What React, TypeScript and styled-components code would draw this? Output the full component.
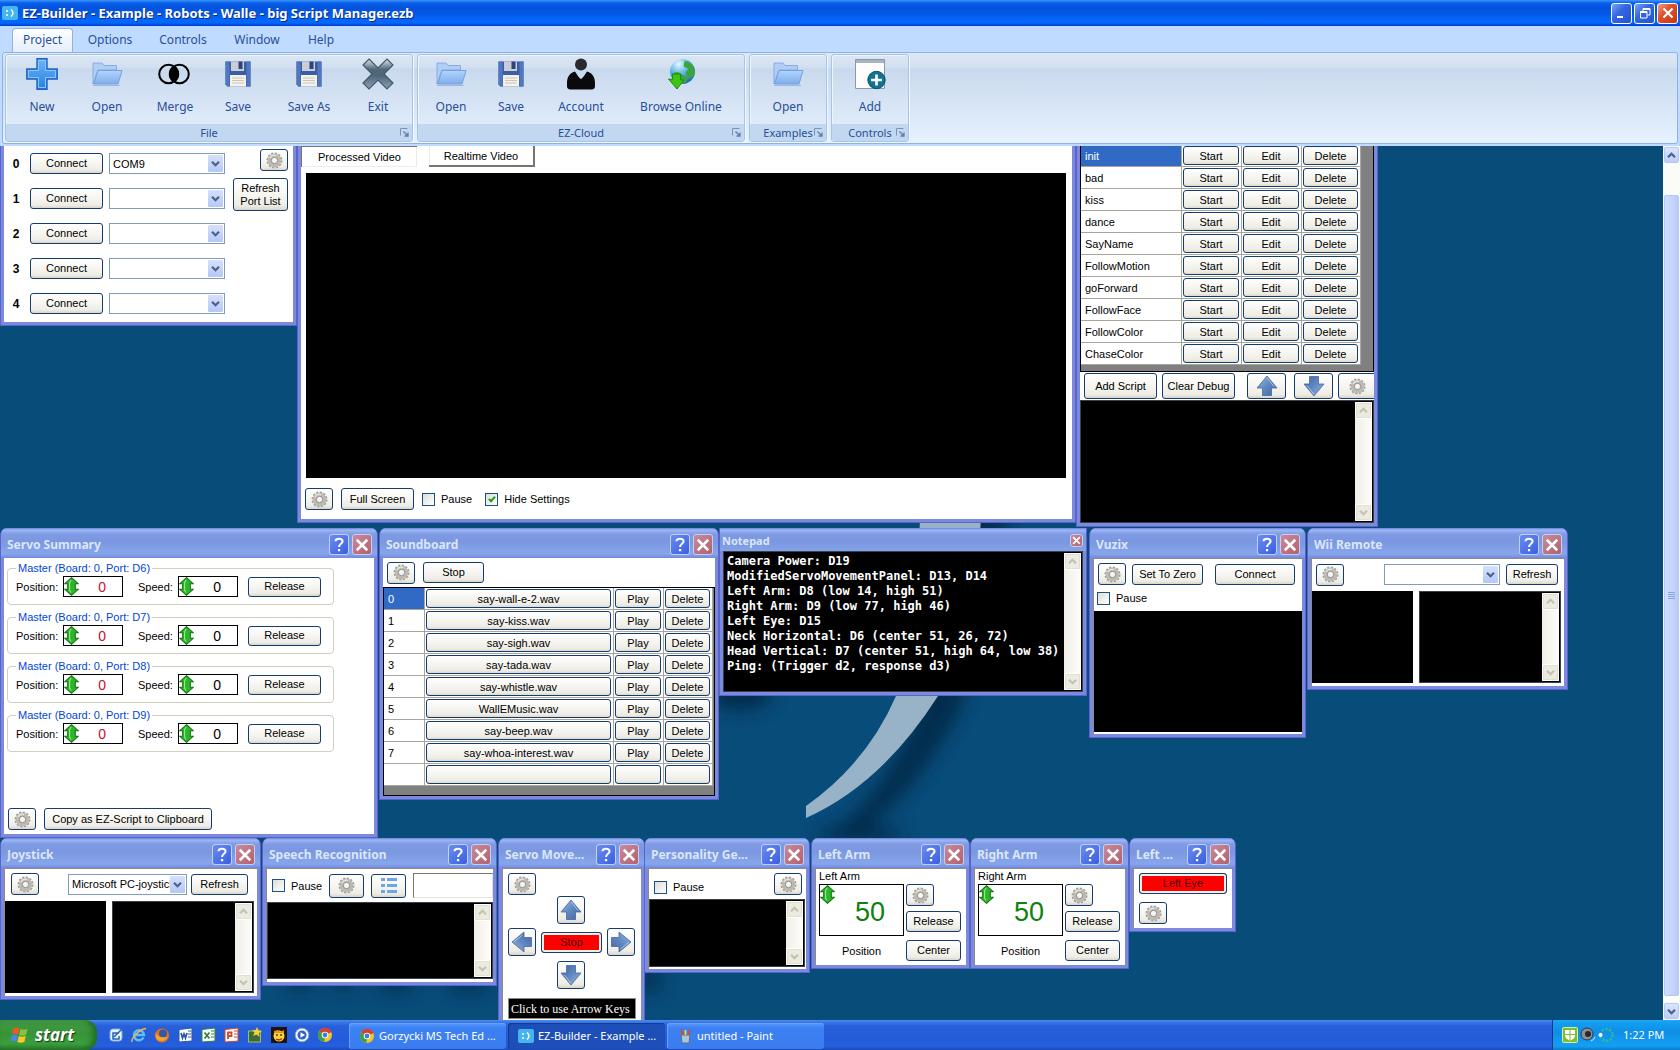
import React from "react";
import styled, { createGlobalStyle, css } from "styled-components";

const SANS = `"Liberation Sans", Arial, sans-serif`;
const UI = `"Noto Sans", Tahoma, sans-serif`;

const GlobalStyle = createGlobalStyle`
  *, *::before, *::after { box-sizing: border-box; }
  body { margin: 0; overflow: hidden; background: #084c7a; }
  button, input, select, textarea { font: inherit; color: inherit; margin: 0; }
`;

/* ---------- shell ---------- */

const Page = styled.div`
  display: flex;
  flex-direction: column;
  height: 100vh;
  font: 11px/14px ${SANS};
  color: #000;
`;

const TitleBar = styled.header`
  display: flex;
  align-items: center;
  gap: 4px;
  flex: none;
  height: 26px;
  padding: 0 2px;
  background: linear-gradient(#3c96ff 0, #0a5fe8 3px, #0453dd 8px, #0458e8 14px, #0468fc 20px, #0466fa 23px, #003ad0 26px);
  color: #fff;
`;

const AppName = styled.h1`
  flex: 1;
  margin: 0;
  font: bold 13px/18px ${UI};
  text-shadow: 1px 1px 0 #0a2a80;
`;

const Caption = styled.button<{ $close?: boolean }>`
  display: grid;
  place-items: center;
  width: 21px;
  height: 21px;
  padding: 0;
  border: 1px solid #fff;
  border-radius: 3px;
  background: ${(p) =>
    p.$close
      ? "linear-gradient(135deg, #f0a088, #e0502c 40%, #c43a10)"
      : "linear-gradient(135deg, #7da6f5, #3468e0 40%, #2252d4)"};
`;

const Captions = styled.div`
  display: flex;
  gap: 2px;
`;

const Tabs = styled.nav`
  display: flex;
  align-items: flex-end;
  flex: none;
  height: 26px;
  padding-left: 12px;
  background: #bfdbff;
  font: 12px/18px ${UI};
`;

const Tab = styled.button<{ $w: number; $active?: boolean }>`
  width: ${(p) => p.$w}px;
  height: 24px;
  padding: 0 0 2px;
  border: 1px solid transparent;
  border-bottom: 0;
  border-radius: 4px 4px 0 0;
  background: none;
  color: #2a4f96;
  ${(p) =>
    p.$active &&
    css`
      border-color: #8db2e3;
      background: linear-gradient(#fff, #e4eefb);
    `}
`;

const Ribbon = styled.div`
  flex: none;
  height: 94px;
  padding: 0 2px 2px;
  background: #bfdbff;
`;

const RibbonPanel = styled.div`
  display: flex;
  gap: 4px;
  height: 92px;
  padding: 1px 2px;
  border: 1px solid #8db2e3;
  border-radius: 3px;
  background: linear-gradient(#dde8f5 0, #d3e0f0 14px, #c9d9ed 16px, #d6e4f5 50px, #e7f2ff 100%);
`;

const Group = styled.section<{ $w: number }>`
  display: flex;
  flex-direction: column;
  width: ${(p) => p.$w}px;
  border: 1px solid #a9c4e4;
  border-radius: 3px;
  box-shadow: 1px 1px 0 #f2f8ff, inset 1px 1px 0 #eef5fd;
  font: 12px/18px ${UI};
  color: #2a4f96;
`;

const GroupItems = styled.div`
  display: flex;
  justify-content: center;
  flex: 1;
`;

const RibbonButton = styled.button<{ $w: number }>`
  display: flex;
  flex-direction: column;
  align-items: center;
  gap: 8px;
  width: ${(p) => p.$w}px;
  padding: 3px 0 0;
  border: 0;
  background: none;
  white-space: nowrap;
`;

const GroupLabel = styled.div`
  display: grid;
  grid-template-columns: 1fr;
  align-items: center;
  height: 17px;
  background: #c2d8f0;
  text-align: center;
  font-size: 11px;
  line-height: 16px;
  & > * { grid-area: 1 / 1; }
  & > svg { justify-self: end; margin-right: 3px; }
`;

const Workspace = styled.main`
  display: flex;
  flex: 1;
  min-height: 0;
`;

/* Free canvas that holds the control windows */
const Desktop = styled.div`
  position: relative;
  flex: 1;
  overflow: hidden;
  background: #084c7a;
`;

const Wallpaper = styled.svg`
  position: absolute;
  inset: 0;
  width: 100%;
  height: 100%;
`;

/* ---------- scroll bars ---------- */

const MainScroll = styled.div`
  display: flex;
  flex-direction: column;
  width: 17px;
  padding: 1px;
  background: #fbfbf8;
`;

const MainThumb = styled.div`
  display: grid;
  place-items: center;
  flex: 1;
  margin: 32px 0 7px;
  border: 1px solid #b4c8f6;
  border-radius: 2px;
  background: linear-gradient(90deg, #d3dffd, #c3d3fd 60%, #b8cbf6);
`;

const MainArrow = styled.button`
  display: grid;
  place-items: center;
  width: 15px;
  height: 16px;
  padding: 0;
  border: 1px solid #b4c8f6;
  border-radius: 2px;
  background: linear-gradient(#dbe5fe, #bccdf8);
`;

const MiniScroll = styled.div`
  display: flex;
  flex-direction: column;
  justify-content: space-between;
  flex: none;
  width: 17px;
  background: linear-gradient(90deg, #f0efe8, #fdfdfa);
`;

const MiniArrow = styled.button`
  display: grid;
  place-items: center;
  width: 17px;
  height: 17px;
  padding: 0;
  border: 1px solid #fff;
  border-radius: 2px;
  background: #ecebe0;
  box-shadow: inset 0 0 0 1px #e0dfd2;
`;

/* ---------- windows ---------- */

const Frame = styled.section<{ $x: number; $y: number; $w: number; $h: number; $cut?: boolean }>`
  position: absolute;
  left: ${(p) => p.$x}px;
  top: ${(p) => p.$y}px;
  width: ${(p) => p.$w}px;
  height: ${(p) => p.$h}px;
  display: flex;
  flex-direction: column;
  padding: 0 3px 3px;
  border: 1px solid #5a62cc;
  border-top: 0;
  border-radius: ${(p) => (p.$cut ? "0" : "7px 7px 0 0")};
  background: #7c8ade;
  overflow: hidden;
`;

const Caps = styled.header<{ $small?: boolean }>`
  display: flex;
  align-items: center;
  flex: none;
  gap: 3px;
  height: ${(p) => (p.$small ? 23 : 30)}px;
  margin: 0 -3px;
  padding: ${(p) => (p.$small ? "2px 3px 0 2px" : "3px 5px 0 6px")};
  background: linear-gradient(#6a7fe0 0, #9db8f2 2px, #7f9be6 6px, #7a97e0 14px, #84a2e8 22px, #86a4ec 26px, #7388dc 100%);
  color: #dbe6fa;
`;

const WinTitle = styled.h2<{ $small?: boolean }>`
  flex: 1;
  min-width: 0;
  margin: 0;
  overflow: hidden;
  font: bold ${(p) => (p.$small ? 11 : 12)}px/18px ${UI};
  white-space: nowrap;
`;

const CapButton = styled.button<{ $close?: boolean; $small?: boolean }>`
  display: grid;
  place-items: center;
  flex: none;
  width: ${(p) => (p.$small ? 13 : 20)}px;
  height: ${(p) => (p.$small ? 13 : 21)}px;
  padding: 0;
  border: 1px solid #c3d0f6;
  border-radius: 3px;
  background: ${(p) => (p.$close ? "linear-gradient(135deg, #c98a9c, #b4606c)" : "linear-gradient(135deg, #6a8cf0, #3a5fe0)")};
`;

const Body = styled.div<{ $sunken?: boolean }>`
  display: flex;
  flex-direction: column;
  flex: 1;
  min-height: 0;
  background: #fff;
  border: 0 solid #8c8c86;
  border-width: ${(p) => (p.$sunken ? "1px 0 0 1px" : "0")};
  overflow: hidden;
`;

const Row = styled.div<{ $gap?: number; $pad?: string; $h?: number; $center?: boolean; $top?: boolean }>`
  display: flex;
  align-items: ${(p) => (p.$top ? "flex-start" : "center")};
  justify-content: ${(p) => (p.$center ? "center" : "flex-start")};
  flex: none;
  gap: ${(p) => p.$gap ?? 8}px;
  padding: ${(p) => p.$pad ?? "0"};
  height: ${(p) => (p.$h ? p.$h + "px" : "auto")};
`;

const Column = styled.div<{ $gap?: number; $pad?: string; $end?: boolean }>`
  display: flex;
  flex-direction: column;
  gap: ${(p) => p.$gap ?? 0}px;
  padding: ${(p) => p.$pad ?? "0"};
  align-items: ${(p) => (p.$end ? "flex-end" : "flex-start")};
`;

const Panes = styled.div`
  display: flex;
  gap: 6px;
  height: 92px;
  padding-right: 3px;
`;

const Push = styled.span`
  flex: 1;
`;

const Button = styled.button<{ $w: number; $h?: number }>`
  display: grid;
  place-items: center;
  flex: none;
  width: ${(p) => p.$w}px;
  height: ${(p) => p.$h ?? 21}px;
  padding: 0;
  border: 1px solid #143c70;
  border-radius: 3px;
  background: linear-gradient(#fff, #f6f5f0 50%, #edece5 85%, #d9d5c9);
  font: 11px/13px ${SANS};
  white-space: pre-line;
`;

const RedButton = styled(Button)`
  background: #f00;
  box-shadow: inset 0 0 0 2px #f0efe8;
  color: #4a0000;
`;

const Flat = styled.button<{ $w: number; $down?: boolean }>`
  width: ${(p) => p.$w}px;
  height: 21px;
  padding: 0;
  background: #fff;
  border: 0 solid #77756c;
  border-width: ${(p) => (p.$down ? "1px 0 0 1px" : "0 2px 2px 0")};
  box-shadow: ${(p) => (p.$down ? "inset -1px -1px 0 #ecebe4" : "inset 1px 0 0 #ecebe4")};
`;

const Check = styled.label`
  display: flex;
  align-items: center;
  gap: 6px;
`;

const Tick = styled.input`
  appearance: none;
  display: grid;
  place-items: center;
  width: 13px;
  height: 13px;
  border: 1px solid #1c5180;
  background: linear-gradient(135deg, #dcdcd7, #fff);
  &:checked::after {
    content: "";
    width: 4px;
    height: 7px;
    margin-bottom: 2px;
    border: solid #21a121;
    border-width: 0 2px 2px 0;
    transform: rotate(42deg);
  }
`;

const SelectBox = styled.span<{ $w: number }>`
  display: grid;
  grid-template-columns: 1fr;
  align-items: center;
  flex: none;
  width: ${(p) => p.$w}px;
  height: 21px;
  border: 1px solid #7f9db9;
  background: #fff;
  & > * { grid-area: 1 / 1; }
  & > select {
    appearance: none;
    width: 100%;
    height: 19px;
    padding: 0 16px 0 3px;
    border: 0;
    background: none;
    line-height: 16px;
  }
  & > span {
    display: grid;
    place-items: center;
    justify-self: end;
    width: 15px;
    height: 17px;
    margin-right: 1px;
    border-radius: 1px;
    background: linear-gradient(#d5e0fc, #b4c8f6);
    pointer-events: none;
  }
`;

const BlackBox = styled.div<{ $w?: number; $m?: string }>`
  flex: ${(p) => (p.$w ? "none" : "1 1 auto")};
  width: ${(p) => (p.$w ? p.$w + "px" : "auto")};
  margin: ${(p) => p.$m ?? "0"};
  background: #000;
`;

const LogFrame = styled.div<{ $m?: string }>`
  display: flex;
  flex: 1;
  min-width: 0;
  min-height: 0;
  margin: ${(p) => p.$m ?? "0"};
  padding: 1px;
  border: 1px solid #39424a;
  background: #000;
`;

const LogText = styled.textarea<{ $mono?: boolean }>`
  flex: 1;
  min-width: 0;
  padding: ${(p) => (p.$mono ? "1px 2px 0" : "0 2px")};
  border: 0;
  outline: 0;
  resize: none;
  overflow: hidden;
  background: #000;
  color: #fff;
  ${(p) =>
    p.$mono &&
    css`
      font: bold 12px/15px "DejaVu Sans Mono", monospace;
      white-space: pre;
    `}
`;

const PortNumber = styled.b`
  width: 16px;
  font: bold 12px/16px ${SANS};
  text-align: center;
`;

/* ---------- tables ---------- */

const GridBox = styled.div<{ $h?: number }>`
  flex: ${(p) => (p.$h ? "none" : "1")};
  height: ${(p) => (p.$h ? p.$h + "px" : "auto")};
  overflow: hidden;
  border: 1px solid #000;
  background: #808080;
`;

const Table = styled.table<{ $w: number }>`
  width: ${(p) => p.$w}px;
  border-collapse: separate;
  border-spacing: 0;
  table-layout: fixed;
  background: #fff;
  td {
    height: 22px;
    padding: 0 2px 0 1px;
    border: solid #a8a69c;
    border-width: 0 1px 1px 0;
  }
  td:first-child { padding-left: 4px; }
  tr:first-child td:first-child { background: #316ac5; color: #fff; }
`;

const CellButton = styled.button`
  display: block;
  width: 100%;
  height: 19px;
  padding: 0;
  border: 1px solid #143c70;
  border-radius: 3px;
  background: linear-gradient(#fff, #f5f4ef 50%, #edece5 85%, #dedace);
  line-height: 16px;
`;

/* ---------- servo parts ---------- */

const ServoSet = styled.fieldset`
  display: flex;
  align-items: center;
  width: 327px;
  height: 43px;
  margin: 0;
  padding: 1px 0 0 8px;
  border: 1px solid #d0d0bf;
  border-radius: 4px;
  legend {
    padding: 0 2px;
    color: #0046d5;
    line-height: 13px;
  }
`;

const ServoLabel = styled.label<{ $w: number }>`
  width: ${(p) => p.$w}px;
`;

const Spin = styled.span<{ $big?: boolean; $gap?: number }>`
  display: flex;
  align-items: flex-start;
  flex: none;
  width: ${(p) => (p.$big ? 85 : 60)}px;
  height: ${(p) => (p.$big ? 52 : 21)}px;
  margin-right: ${(p) => p.$gap ?? 0}px;
  border: 1px solid #000;
  background: #fff;
  input {
    flex: 1;
    min-width: 0;
    height: 100%;
    padding: ${(p) => (p.$big ? "4px 18px 0 0" : "0 16px 0 0")};
    border: 0;
    outline: 0;
    background: none;
    text-align: right;
    font-size: ${(p) => (p.$big ? 27 : 14)}px;
  }
`;

const Value = styled.input<{ $c: string }>`
  color: ${(p) => p.$c};
`;

const Phrase = styled.input`
  flex: 1;
  min-width: 0;
  height: 25px;
  border: 1px solid #e4e2d8;
  border-top-color: #77756c;
  border-left-color: #77756c;
`;

const KeyHint = styled.input`
  width: 128px;
  height: 21px;
  margin: 9px 0 0 5px;
  padding: 2px 0 0 2px;
  border: 1px solid #8c8c86;
  background: #000;
  color: #fff;
  font: 12px/16px "Liberation Serif", serif;
`;

/* ---------- task bar ---------- */

const TaskBar = styled.footer`
  display: flex;
  flex: none;
  height: 30px;
  background: linear-gradient(#4a8ef0 0, #3a78e8 2px, #2860dc 6px, #245bd8 20px, #2460e0 26px, #1c48b4 30px);
  color: #fff;
  font: 11px/16px ${UI};
`;

const Start = styled.button`
  display: flex;
  align-items: center;
  gap: 6px;
  width: 97px;
  padding: 0 0 0 10px;
  border: 0;
  border-radius: 0 12px 12px 0;
  background: linear-gradient(#5cad5c 0, #3f9a40 4px, #389338 14px, #3aa03c 24px, #2a7a2c 100%);
  box-shadow: inset -4px 0 6px #1f6a24;
  color: #fff;
  font: italic bold 17px/20px "Open Sans", "Noto Sans", sans-serif;
  text-shadow: 1px 1px 1px #143c14;
`;

const QuickLaunch = styled.div`
  display: flex;
  align-items: center;
  justify-content: space-between;
  width: 225px;
  margin: 0 16px 0 11px;
`;

const QuickButton = styled.button`
  display: grid;
  padding: 0;
  border: 0;
  background: none;
`;

const Task = styled.button<{ $active?: boolean }>`
  display: flex;
  align-items: center;
  gap: 4px;
  width: 157px;
  height: 26px;
  margin: 3px 2px 0 0;
  padding: 0 0 0 10px;
  border: 0;
  border-radius: 3px;
  background: ${(p) => (p.$active ? "#1e4fb8" : "linear-gradient(#5a98f8, #3c81f3 5px, #3a7cf0)")};
  box-shadow: inset 1px 1px 1px ${(p) => (p.$active ? "#123a8c" : "#6aa4fa")};
  font: 11px/16px ${UI};
  white-space: nowrap;
  & > svg { flex: none; }
`;

const Tray = styled.div`
  display: flex;
  align-items: center;
  gap: 2px;
  width: 128px;
  margin-left: auto;
  padding-left: 9px;
  border-left: 1px solid #0a3a90;
  background: linear-gradient(#1ea8f4 0, #139ef0 3px, #0f8ee8 12px, #12a0f4 26px, #0c78c8 30px);
`;

const Clock = styled.time`
  margin-left: 7px;
`;

/* ---------- icons ---------- */

const Gear = () => (
  <svg width="17" height="17" viewBox="0 0 17 17" fill="none" aria-hidden="true">
    <circle cx="8.5" cy="8.5" r="7.1" stroke="#a3a09b" strokeWidth="1.8" strokeDasharray="2.3 1.42" />
    <circle cx="8.5" cy="8.5" r="5" stroke="#bdbab4" strokeWidth="3.6" />
    <circle cx="8.5" cy="8.5" r="3.2" stroke="#8f8d89" strokeWidth="1" />
    <path d="M4 6a5.2 5.2 0 0 1 6-2.4" stroke="#e6e4df" strokeWidth="1.4" />
  </svg>
);

const Chevron = ({ up, color = "#4d6185", size = 9 }: { up?: boolean; color?: string; size?: number }) => (
  <svg width={size} height={size} viewBox="0 0 9 9" fill="none" aria-hidden="true">
    <path d={up ? "M1 6.2 4.5 2.7 8 6.2" : "M1 2.8 4.5 6.3 8 2.8"} stroke={color} strokeWidth="2.2" />
  </svg>
);

const Cross = ({ size = 12 }: { size?: number }) => (
  <svg width={size} height={size} viewBox="0 0 12 12" aria-hidden="true">
    <path d="M1.5 1.5 10.5 10.5M10.5 1.5 1.5 10.5" stroke="#fff" strokeWidth="2.2" />
  </svg>
);

const Question = () => (
  <svg width="12" height="15" viewBox="0 0 12 15" fill="none" aria-hidden="true">
    <path d="M2.5 4.2C2.6 1 9.6 .8 9.6 4.3 9.6 6.8 6 6.8 6 10" stroke="#fff" strokeWidth="2" />
    <path d="M4.9 12h2.3v2.2H4.9z" fill="#fff" />
  </svg>
);

const UpDown = () => (
  <svg width="15" height="19" viewBox="0 0 13 19" preserveAspectRatio="none" aria-hidden="true">
    <path d="M6.5.6 12.400 6.800H9.800V12.200H12.400L6.500 18.400.600 12.200H3.200V6.800H.600Z" fill="#2fb52c" stroke="#127312" strokeWidth=".9" />
    <path d="M6 3 4.800 6v7L6 15.500" stroke="#92ea83" fill="none" />
  </svg>
);

const Arrow = ({ turn = 0 }: { turn?: number }) => (
  <svg width="22" height="22" viewBox="0 0 22 22" aria-hidden="true">
    <defs>
      <linearGradient id="arrowFill" x1="0" y1="0" x2="1" y2="1">
        <stop offset="0" stopColor="#9dbbe2" />
        <stop offset=".5" stopColor="#6288bf" />
        <stop offset="1" stopColor="#3d66a8" />
      </linearGradient>
    </defs>
    <g transform={`rotate(${turn} 11 11)`}>
      <path d="M11 1 21 13H15.5V20.5H6.5V13H1Z" fill="url(#arrowFill)" stroke="#46679c" strokeWidth=".8" />
      <path d="M11 2.600 18 11.500" stroke="#bcd2ee" strokeWidth=".8" />
    </g>
  </svg>
);

const ListIcon = () => (
  <svg width="18" height="17" viewBox="0 0 18 17" aria-hidden="true">
    {[1, 7, 13].map((y) => (
      <g key={y} fill="#6aa5ee">
        <rect x="1" y={y} width="4" height="3" />
        <rect x="7" y={y} width="10" height="3" />
      </g>
    ))}
  </svg>
);

const AppIcon = () => (
  <svg width="16" height="14" viewBox="0 0 16 14" aria-hidden="true">
    <rect width="16" height="14" rx="2" fill="#45b5f2" />
    <path d="M5 4v2M5 8v2M9 3.500Q13 7 9 10.500" stroke="#fff" strokeWidth="1.500" fill="none" />
  </svg>
);

const Launcher = () => (
  <svg width="9" height="9" viewBox="0 0 9 9" fill="none" aria-hidden="true">
    <path d="M.5 7.500V.500h7" stroke="#7c93b8" />
    <path d="M3.500 3.500 8 8M8 4.500V8H4.500" stroke="#5f7ba8" strokeWidth="1.300" />
  </svg>
);

const svgProps = { width: 32, height: 32, viewBox: "0 0 32 32", "aria-hidden": true } as const;

const PlusIcon = () => (
  <svg {...svgProps}>
    <defs>
      <linearGradient id="plus" x1="0" y1="0" x2="0" y2="1">
        <stop offset="0" stopColor="#6cb4f8" />
        <stop offset="1" stopColor="#2680e0" />
      </linearGradient>
    </defs>
    <path d="M11 .800h10V11H31.200V21H21V31.200H11V21H.800V11H11z" fill="url(#plus)" stroke="#1f62c4" strokeWidth="1.400" />
    <path d="M12.500 2.500h7V12.500H29.500v7H19.500V29.500h-7V19.500H2.500v-7H12.500z" stroke="#8cc6fa" fill="none" />
  </svg>
);

const FolderIcon = () => (
  <svg {...svgProps}>
    <defs>
      <linearGradient id="folder" x1="0" y1="0" x2="0" y2="1">
        <stop offset="0" stopColor="#b3d4fb" />
        <stop offset="1" stopColor="#7fadec" />
      </linearGradient>
    </defs>
    <path d="M2 26V5h9l2 2.500h12.500V12H7z" fill="#b0cdf4" stroke="#86ace6" />
    <path d="M7 12.500h24l-4 13.500H2.500z" fill="url(#folder)" stroke="#74a0e4" />
    <path d="M2 27.500h27" stroke="#8aa6cc" opacity=".7" />
  </svg>
);

const MergeIcon = () => (
  <svg width="34" height="32" viewBox="0 0 34 32" aria-hidden="true">
    <path d="M16 7.500a9.500 9.500 0 0 1 0 17 9.500 9.500 0 0 1 0-17z" fill="#000" />
    <circle cx="10.500" cy="16" r="9.300" fill="none" stroke="#000" strokeWidth="2" />
    <circle cx="21.500" cy="16" r="9.300" fill="none" stroke="#000" strokeWidth="2" />
  </svg>
);

const DiskIcon = () => (
  <svg {...svgProps}>
    <path d="M3.500 3.500h25v25h-23l-2-2z" fill="#3b5ea8" />
    <path d="M3.500 3.500h4v25h-2l-2-2zM24.500 3.500h4v25h-4z" fill="#5277be" />
    <path d="M9 3.500h13V13H9z" fill="#c9cdd6" />
    <path d="M16.500 3.500h4V11h-4z" fill="#2c4478" />
    <path d="M8 17h16v11.500H8z" fill="#f4f2ea" />
    <path d="M10 20h12M10 22.500h12M10 25h12" stroke="#c9c6bb" />
  </svg>
);

const ExitIcon = () => (
  <svg {...svgProps}>
    <defs>
      <linearGradient id="exit" x1="0" y1="0" x2="0" y2="1">
        <stop offset="0" stopColor="#dfe8f0" />
        <stop offset=".35" stopColor="#51677a" />
        <stop offset=".55" stopColor="#4f6578" />
        <stop offset="1" stopColor="#8ea3b5" />
      </linearGradient>
    </defs>
    <path d="M7 1 16 10 25 1 31 7 22 16l9 9-6 6-9-9-9 9-6-6 9-9-9-9z" fill="url(#exit)" stroke="#44586a" strokeWidth="1.200" />
  </svg>
);

const PersonIcon = () => (
  <svg {...svgProps}>
    <circle cx="16" cy="6.500" r="6" fill="#2a2a2c" />
    <path d="M10 13.500c1.500 2 4 6.500 6 7.500 2-1 4.500-5.500 6-7.500C28 15 30 20 30 25v3c0 2-1 3.500-3.500 3.500h-21C3 31.500 2 30 2 28v-3c0-5 2-10 8-11.500z" fill="#0a0a0c" />
  </svg>
);

const GlobeIcon = () => (
  <svg {...svgProps}>
    <defs>
      <radialGradient id="globe" cx=".35" cy=".2" r=".9">
        <stop offset="0" stopColor="#e9f8ff" />
        <stop offset=".45" stopColor="#5cb4e4" />
        <stop offset="1" stopColor="#14609c" />
      </radialGradient>
    </defs>
    <circle cx="17.500" cy="13.500" r="12.500" fill="url(#globe)" />
    <path d="M8 16c2-3 6-2 8 0s5 1 6 4-3 6-6 5.500C10 25 7 20 8 16zM20 3c6 1 10 6 9.800 11-1 6-5 7-7 5s-3-5 0-7-4-2-4-4 0-4 1.200-5z" fill="#3aa53c" />
    <path d="M7.500 16h8v6H19l-7 9L3.500 21l4 .500z" fill="#3cc412" stroke="#1d8a0a" />
  </svg>
);

const AddIcon = () => (
  <svg {...svgProps}>
    <path d="M1.500 1.500h29v29h-29z" fill="#fdfdfd" stroke="#8d97a6" />
    <path d="M2 2h28v3H2z" fill="#a9b2c0" />
    <circle cx="22.500" cy="22" r="8.700" fill="#11748c" stroke="#0b5266" />
    <path d="M22.500 16.500v11M17 22h11" stroke="#fff" strokeWidth="2.600" />
  </svg>
);

const Flag = () => (
  <svg width="19" height="18" viewBox="0 0 19 18" aria-hidden="true">
    <path d="M3.500 2.500q3-2 6 0L8 8.500q-3-1.700-6 0z" fill="#f0582c" />
    <path d="M10.500 3q3 1.500 7 0L16 9q-3.500 1.500-7 0z" fill="#86c440" />
    <path d="M1.800 9.500q3-1.700 6 0L6.300 15.500q-3-1.700-6 0z" fill="#4a86ec" />
    <path d="M8.800 10q3.500 1.500 7 0l-1.500 6q-3.500 1.500-7 0z" fill="#fbc928" />
  </svg>
);

const Q = ({ children }: { children: React.ReactNode }) => (
  <svg width="16" height="16" viewBox="0 0 16 16" aria-hidden="true">
    {children}
  </svg>
);

const ChromeShapes = () => (
  <>
    <circle cx="8" cy="8" r="7" fill="#f2c52c" />
    <path d="M8 8 2 4.300A7 7 0 0 1 14.500 5z" fill="#d93f30" />
    <path d="M8 8 2 4.300A7 7 0 0 0 7.500 15z" fill="#3c9f48" />
    <circle cx="8" cy="8" r="3.300" fill="#fff" />
    <circle cx="8" cy="8" r="2.400" fill="#3d7fe0" />
  </>
);

const OfficeShapes = ({ color, mark }: { color: string; mark: string }) => (
  <>
    <path d="M1 2.500 14 1v13L1 15z" fill="#fff" stroke={color} />
    <path d="M10 4h3.500M10 7h3.500M10 10h3.500" stroke={color} />
    <path d={mark} stroke={color} strokeWidth="1.800" fill="none" />
  </>
);

const quick: [string, React.ReactNode][] = [
  ["Show Desktop", <><rect x="2" y="2" width="12" height="12" rx="3" fill="#e9f1fb" stroke="#7fb0e0" /><path d="M6 10 14 2M11 6H5v6h6V9" stroke="#2a64ac" strokeWidth="1.500" fill="none" /></>],
  ["Internet Explorer", <><path d="M12.500 10.500A5 5 0 1 1 13 8H4" stroke="#5cc0f6" strokeWidth="2.500" fill="none" /><path d="M1 15C0 11 9 2 15 1.500" stroke="#f0bc3a" strokeWidth="1.400" fill="none" /></>],
  ["Firefox", <><circle cx="8" cy="8.500" r="7" fill="#e8701a" /><circle cx="9" cy="6.500" r="4" fill="#3458a8" /><path d="M1.500 5c1 4 5 6 12 5-1 4-9 6-11.500 1z" fill="#f7a428" /></>],
  ["Word", <OfficeShapes color="#2f58a8" mark="M3 6 4.500 11 6 7 7.500 11 9 6" />],
  ["Excel", <OfficeShapes color="#2f8440" mark="M3.500 5.500 8.500 11.500M8.500 5.500 3.500 11.500" />],
  ["PowerPoint", <OfficeShapes color="#d2482a" mark="M4 12V5.500H7.500V9H4" />],
  ["Notebook", <><rect x="1.500" y="4" width="12" height="11" fill="#3f6a3a" stroke="#9bc24c" /><path d="m10 0 1.500 3.500L15 4l-3 2 .5 4L9.500 7.500 6 9l1.500-3.500L5 3l3.500.2z" fill="#f8d22e" /></>],
  ["Character", <><rect width="16" height="16" fill="#1c1410" /><circle cx="8" cy="9" r="5.500" fill="#f9d53a" /><path d="M3 4 7 3l2 2 4-2v3H3z" fill="#f08a24" /><path d="M5 12q3 2 6-.5" stroke="#c02c18" strokeWidth="1.500" fill="none" /><path d="M6 7v2M10 7v2" stroke="#000" /></>],
  ["Media Player", <><circle cx="8" cy="8" r="6.800" fill="#f2f5f9" stroke="#8fa3bd" /><circle cx="8" cy="8" r="4.500" fill="#2e62c8" /><path d="M6.500 5.300 11 8l-4.500 2.700z" fill="#fff" /></>],
  ["Chrome", <ChromeShapes />],
];

/* ---------- shared pieces ---------- */

const Mini = () => (
  <MiniScroll>
    <MiniArrow disabled aria-label="Scroll up"><Chevron up color="#c4c2b4" /></MiniArrow>
    <MiniArrow disabled aria-label="Scroll down"><Chevron color="#c4c2b4" /></MiniArrow>
  </MiniScroll>
);

const Log = ({ label, m, text = "", mono }: { label: string; m?: string; text?: string; mono?: boolean }) => (
  <LogFrame $m={m}>
    <LogText aria-label={label} readOnly value={text} $mono={mono} />
    <Mini />
  </LogFrame>
);

const GearButton = ({ w = 28, h = 22 }: { w?: number; h?: number }) => (
  <Button $w={w} $h={h} aria-label="Settings"><Gear /></Button>
);

const Dropdown = ({ label, w, value = "" }: { label: string; w: number; value?: string }) => (
  <SelectBox $w={w}>
    <select aria-label={label} defaultValue={value}><option>{value}</option></select>
    <span><Chevron /></span>
  </SelectBox>
);

const CheckBox = ({ text, on }: { text: string; on?: boolean }) => (
  <Check><Tick type="checkbox" defaultChecked={on} />{text}</Check>
);

type WinProps = {
  title?: string; x: number; y: number; w: number; h: number;
  small?: boolean; sunken?: boolean; children: React.ReactNode;
};

const Win = ({ title, x, y, w, h, small, sunken, children }: WinProps) => (
  <Frame $x={x} $y={y} $w={w} $h={h} $cut={!title || small}>
    {title && (
      <Caps $small={small}>
        <WinTitle $small={small}>{title}</WinTitle>
        {!small && <CapButton aria-label="Help"><Question /></CapButton>}
        <CapButton $close $small={small} aria-label="Close"><Cross size={small ? 9 : 14} /></CapButton>
      </Caps>
    )}
    <Body $sunken={sunken}>{children}</Body>
  </Frame>
);

const Item = ({ icon, label, w }: { icon: React.ReactNode; label: string; w: number }) => (
  <RibbonButton $w={w}>{icon}{label}</RibbonButton>
);

const RibbonGroup = ({ name, w, children }: { name: string; w: number; children: React.ReactNode }) => (
  <Group $w={w}>
    <GroupItems>{children}</GroupItems>
    <GroupLabel><span>{name}</span><Launcher /></GroupLabel>
  </Group>
);

const ServoRow = ({ port }: { port: string }) => (
  <ServoSet>
    <legend>Master (Board: 0, Port: {port})</legend>
    <ServoLabel $w={47} htmlFor={`pos${port}`}>Position:</ServoLabel>
    <Spin $gap={15}><UpDown /><Value id={`pos${port}`} $c="#c8102c" defaultValue="0" /></Spin>
    <ServoLabel $w={40} htmlFor={`speed${port}`}>Speed:</ServoLabel>
    <Spin $gap={10}><UpDown /><Value id={`speed${port}`} $c="#000" defaultValue="0" /></Spin>
    <Button $w={73} $h={20}>Release</Button>
  </ServoSet>
);

const ArmName = styled.label`
  display: block;
  height: 15px;
  padding-left: 3px;
`;

const ArmGrid = styled.div`
  display: grid;
  grid-template-columns: 85px 55px;
  column-gap: 2px;
  padding-left: 3px;
`;

const ArmCaption = styled.span`
  align-self: end;
  padding-bottom: 3px;
  text-align: center;
`;

const Arm = ({ name, x }: { name: string; x: number }) => (
  <Win title={name} x={x} y={692} w={159} h={131} sunken>
    <ArmName htmlFor={`arm${x}`}>{name}</ArmName>
    <ArmGrid>
      <Spin $big><UpDown /><Value id={`arm${x}`} $c="#108010" defaultValue="50" /></Spin>
      <Column $gap={5}><GearButton /><Button $w={55}>Release</Button></Column>
      <ArmCaption>Position</ArmCaption>
      <Column $pad="4px 0 0"><Button $w={55}>Center</Button></Column>
    </ArmGrid>
  </Win>
);

const scripts = ["init", "bad", "kiss", "dance", "SayName", "FollowMotion", "goForward", "FollowFace", "FollowColor", "ChaseColor"];
const sounds = ["say-wall-e-2.wav", "say-kiss.wav", "say-sigh.wav", "say-tada.wav", "say-whistle.wav", "WallEMusic.wav", "say-beep.wav", "say-whoa-interest.wav", ""];

const notes = `Camera Power: D19
ModifiedServoMovementPanel: D13, D14
Left Arm: D8 (low 14, high 51)
Right Arm: D9 (low 77, high 46)
Left Eye: D15
Neck Horizontal: D6 (center 51, 26, 72)
Head Vertical: D7 (center 51, high 64, low 38)
Ping: (Trigger d2, response d3)`;

export default function App() {
  return (
    <Page>
      <GlobalStyle />
      <TitleBar>
        <AppIcon />
        <AppName>EZ-Builder - Example - Robots - Walle - big Script Manager.ezb</AppName>
        <Captions>
          <Caption aria-label="Minimize">
            <svg width="12" height="12" aria-hidden="true"><path d="M1 9h6v2H1z" fill="#fff" /></svg>
          </Caption>
          <Caption aria-label="Restore">
            <svg width="12" height="12" fill="none" stroke="#fff" aria-hidden="true">
              <path d="M4 4V1.500h7V8H8.500M1 4.500h7V11H1.500V4.500M1 5.500h7M4 2.500h7" />
            </svg>
          </Caption>
          <Caption $close aria-label="Close"><Cross /></Caption>
        </Captions>
      </TitleBar>

      <Tabs>
        <Tab $w={61} $active>Project</Tab>
        <Tab $w={74}>Options</Tab>
        <Tab $w={72}>Controls</Tab>
        <Tab $w={76}>Window</Tab>
        <Tab $w={52}>Help</Tab>
      </Tabs>

      <Ribbon>
        <RibbonPanel>
          <RibbonGroup name="File" w={408}>
            <Item icon={<PlusIcon />} label="New" w={60} />
            <Item icon={<FolderIcon />} label="Open" w={70} />
            <Item icon={<MergeIcon />} label="Merge" w={66} />
            <Item icon={<DiskIcon />} label="Save" w={60} />
            <Item icon={<DiskIcon />} label="Save As" w={82} />
            <Item icon={<ExitIcon />} label="Exit" w={56} />
          </RibbonGroup>
          <RibbonGroup name="EZ-Cloud" w={328}>
            <Item icon={<FolderIcon />} label="Open" w={60} />
            <Item icon={<DiskIcon />} label="Save" w={60} />
            <Item icon={<PersonIcon />} label="Account" w={80} />
            <Item icon={<GlobeIcon />} label="Browse Online" w={120} />
          </RibbonGroup>
          <RibbonGroup name="Examples" w={78}>
            <Item icon={<FolderIcon />} label="Open" w={70} />
          </RibbonGroup>
          <RibbonGroup name="Controls" w={78}>
            <Item icon={<AddIcon />} label="Add" w={70} />
          </RibbonGroup>
        </RibbonPanel>
      </Ribbon>

      <Workspace>
        <Desktop>
          <Wallpaper aria-hidden="true">
            <defs>
              <filter id="soft" x="-50%" y="-50%" width="200%" height="200%">
                <feGaussianBlur stdDeviation="9" />
              </filter>
            </defs>
            <g fill="#03203c" opacity=".75" filter="url(#soft)">
              <path d="M950 370H1010L1000 400 962 560Q905 670 832 700V685Q885 650 920 560z" />
              <ellipse cx="740" cy="548" rx="32" ry="16" />
              <ellipse cx="860" cy="688" rx="44" ry="8" />
            </g>
            <g fill="#03203c" opacity=".6" filter="url(#soft)">
              <ellipse cx="300" cy="835" rx="14" ry="10" />
              <ellipse cx="342" cy="835" rx="12" ry="10" />
              <ellipse cx="396" cy="837" rx="20" ry="10" />
              <ellipse cx="468" cy="837" rx="22" ry="10" />
              <ellipse cx="650" cy="834" rx="12" ry="14" />
            </g>
            <path d="M920 370H981Q978 470 938 550 882 638 806 672V660Q867 617 896 550 918 480 920 370z" fill="#98b3c8" />
          </Wallpaper>

          <Win x={0} y={0} w={297} h={180}>
            <Row $gap={0} $top>
              <Column $gap={14} $pad="7px 0 0 4px">
                {["COM9", "", "", "", ""].map((port, i) => (
                  <Row key={i} $gap={6}>
                    <PortNumber>{i}</PortNumber>
                    <Button $w={73}>Connect</Button>
                    <Dropdown label={`Port ${i}`} w={116} value={port} />
                  </Row>
                ))}
              </Column>
              <Push />
              <Column $gap={7} $end $pad="3px 5px 0 0">
                <GearButton />
                <Button $w={55} $h={33}>{"Refresh\nPort List"}</Button>
              </Column>
            </Row>
          </Win>

          <Win x={297} y={0} w={779} h={377}>
            <Row $gap={12}>
              <Flat $w={116} $down>Processed Video</Flat>
              <Flat $w={106}>Realtime Video</Flat>
            </Row>
            <BlackBox $m="6px 6px 0 5px" />
            <Row $gap={8} $pad="10px 0 9px 4px">
              <GearButton />
              <Button $w={73} $h={22}>Full Screen</Button>
              <Row $gap={13}>
                <CheckBox text="Pause" />
                <CheckBox text="Hide Settings" on />
              </Row>
            </Row>
          </Win>

          <Win x={1076} y={-2} w={302} h={383}>
            <GridBox $h={228}>
              <Table $w={280}>
                <colgroup><col width="101" /><col width="60" /><col width="60" /><col width="59" /></colgroup>
                <tbody>
                  {scripts.map((s) => (
                    <tr key={s}>
                      <td>{s}</td>
                      <td><CellButton>Start</CellButton></td>
                      <td><CellButton>Edit</CellButton></td>
                      <td><CellButton>Delete</CellButton></td>
                    </tr>
                  ))}
                </tbody>
              </Table>
            </GridBox>
            <Row $gap={5} $h={28} $pad="0 0 0 4px">
              <Button $w={73} $h={26}>Add Script</Button>
              <Button $w={73} $h={26}>Clear Debug</Button>
              <Row $gap={8} $pad="0 0 0 7px">
                <Button $w={39} $h={26} aria-label="Move up"><Arrow /></Button>
                <Button $w={39} $h={26} aria-label="Move down"><Arrow turn={180} /></Button>
              </Row>
              <GearButton w={39} h={26} />
            </Row>
            <Log label="Debug output" />
          </Win>

          <Win title="Servo Summary" x={0} y={382} w={378} h={310}>
            <Column $gap={6} $pad="4px 0 0 3px">
              {["D6", "D7", "D8", "D9"].map((p) => <ServoRow key={p} port={p} />)}
            </Column>
            <Push />
            <Row $gap={8} $pad="0 0 4px 4px">
              <GearButton />
              <Button $w={168} $h={22}>Copy as EZ-Script to Clipboard</Button>
            </Row>
          </Win>

          <Win title="Soundboard" x={379} y={382} w={340} h={272}>
            <Row $gap={8} $h={29} $pad="0 0 0 4px">
              <GearButton />
              <Button $w={61}>Stop</Button>
            </Row>
            <GridBox>
              <Table $w={329}>
                <colgroup><col width="41" /><col width="189" /><col width="50" /><col width="49" /></colgroup>
                <tbody>
                  {sounds.map((s, i) => (
                    <tr key={i}>
                      <td>{s ? i : ""}</td>
                      <td><CellButton>{s}</CellButton></td>
                      <td><CellButton>{s && "Play"}</CellButton></td>
                      <td><CellButton>{s && "Delete"}</CellButton></td>
                    </tr>
                  ))}
                </tbody>
              </Table>
            </GridBox>
          </Win>

          <Win title="Notepad" x={719} y={382} w={368} h={168} small>
            <Log label="Notes" text={notes} mono />
          </Win>

          <Win title="Vuzix" x={1089} y={382} w={217} h={210} sunken>
            <Row $gap={6} $pad="4px 0 0 4px">
              <GearButton />
              <Button $w={71}>Set To Zero</Button>
              <Row $pad="0 0 0 6px"><Button $w={80}>Connect</Button></Row>
            </Row>
            <Row $h={26} $pad="0 0 0 3px"><CheckBox text="Pause" /></Row>
            <BlackBox $m="0 0 2px" />
          </Win>

          <Win title="Wii Remote" x={1307} y={382} w={261} h={162} sunken>
            <Row $gap={6} $h={32} $pad="0 6px 1px 4px">
              <GearButton />
              <Push />
              <Dropdown label="Wii device" w={116} />
              <Button $w={52}>Refresh</Button>
            </Row>
            <Panes>
              <BlackBox $w={101} />
              <Log label="Wii log" />
            </Panes>
          </Win>

          <Win title="Joystick" x={0} y={692} w={261} h={162} sunken>
            <Row $gap={4} $h={32} $pad="0 9px 2px 6px">
              <GearButton />
              <Push />
              <Dropdown label="Joystick device" w={119} value="Microsoft PC-joystick" />
              <Button $w={57}>Refresh</Button>
            </Row>
            <Panes>
              <BlackBox $w={101} />
              <Log label="Joystick log" />
            </Panes>
          </Win>

          <Win title="Speech Recognition" x={262} y={692} w={235} h={148} sunken>
            <Row $gap={7} $h={33} $pad="0 0 0 5px">
              <CheckBox text="Pause" />
              <GearButton w={35} h={24} />
              <Button $w={35} $h={24} aria-label="Phrase list"><ListIcon /></Button>
              <Phrase aria-label="Last phrase" />
            </Row>
            <Log label="Speech log" m="0 0 3px" />
          </Win>

          <Win title="Servo Move..." x={498} y={692} w={147} h={200} sunken>
            <Row $pad="4px 0 1px 5px"><GearButton /></Row>
            <Row $center $pad="0 2px 4px 0"><Button $w={28} $h={28} aria-label="Up"><Arrow /></Button></Row>
            <Row $gap={5} $pad="0 0 0 5px">
              <Button $w={28} $h={28} aria-label="Left"><Arrow turn={-90} /></Button>
              <RedButton $w={61}>Stop</RedButton>
              <Button $w={28} $h={28} aria-label="Right"><Arrow turn={90} /></Button>
            </Row>
            <Row $center $pad="5px 2px 0 0"><Button $w={28} $h={28} aria-label="Down"><Arrow turn={180} /></Button></Row>
            <KeyHint aria-label="Arrow key control" readOnly value="Click to use Arrow Keys" />
          </Win>

          <Win title="Personality Ge..." x={644} y={692} w={166} h={135} sunken>
            <Row $h={30} $pad="0 4px 0 5px">
              <Row $pad="6px 0 0"><CheckBox text="Pause" /></Row>
              <Push />
              <GearButton />
            </Row>
            <Log label="Personality log" m="0 1px 2px 0" />
          </Win>

          <Arm name="Left Arm" x={811} />
          <Arm name="Right Arm" x={970} />

          <Win title="Left ..." x={1129} y={692} w={107} h={94} sunken>
            <Column $gap={8} $pad="4px 0 0 5px">
              <RedButton $w={88}>Left Eye</RedButton>
              <GearButton />
            </Column>
          </Win>
        </Desktop>

        <MainScroll>
          <MainArrow aria-label="Scroll up"><Chevron up /></MainArrow>
          <MainThumb>
            <svg width="8" height="8" aria-hidden="true"><path d="M0 .5h7M0 2.500h7M0 4.500h7M0 6.500h7" stroke="#8ba6e4" /></svg>
          </MainThumb>
          <MainArrow aria-label="Scroll down"><Chevron /></MainArrow>
        </MainScroll>
      </Workspace>

      <TaskBar>
        <Start><Flag />start</Start>
        <QuickLaunch>
          {quick.map(([name, art]) => (
            <QuickButton key={name} aria-label={name}><Q>{art}</Q></QuickButton>
          ))}
        </QuickLaunch>
        <Task><Q><ChromeShapes /></Q>Gorzycki MS Tech Ed ...</Task>
        <Task $active><AppIcon />EZ-Builder - Example ...</Task>
        <Task>
          <Q><path d="M4 7h9l-1 8H5z" fill="#a9c6d8" stroke="#5b6f86" /><path d="M6 7 4 1M11 7l2-5" stroke="#d8482c" strokeWidth="1.800" /><path d="M8.500 7V2" stroke="#f2d23c" strokeWidth="1.800" /></Q>
          untitled - Paint
        </Task>
        <Tray>
          <Q><rect x=".5" y=".5" width="15" height="15" rx="1" fill="#7fbe30" stroke="#d8eeb0" /><path d="M3 3h10v5q0 4-5 5.500Q3 12 3 8z" fill="#fff" /><path d="M8 3v10M3 7.500h10" stroke="#7fbe30" /></Q>
          <Q><circle cx="7" cy="7" r="6" fill="#8b8f96" stroke="#34383e" /><circle cx="8" cy="7" r="3" fill="#25282c" /><path d="M11 14q3-1 4-4" stroke="#cfe8fc" fill="none" /></Q>
          <Q><circle cx="8.500" cy="8" r="6" fill="none" stroke="#2fbf8c" strokeWidth="2.400" strokeDasharray="2.200 1.570" /><circle cx="2.500" cy="8" r="2" fill="#fff" /></Q>
          <Clock>1:22 PM</Clock>
        </Tray>
      </TaskBar>
    </Page>
  );
}
